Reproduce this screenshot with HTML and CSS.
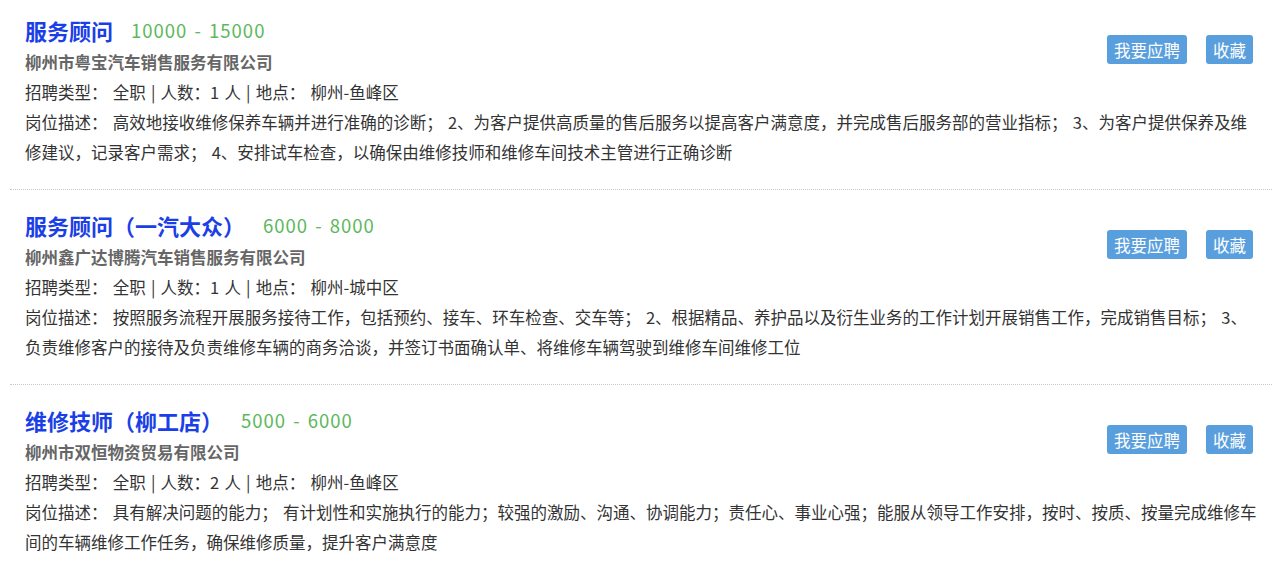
FILE: index.html
```html
<!DOCTYPE html>
<html lang="zh-CN">
<head>
    <meta charset="UTF-8">
    <meta name="viewport" content="width=device-width, initial-scale=1.0">
    <title>招聘信息</title>
    <link rel="stylesheet" href="styles.css">
</head>
<body>
    <ul class="job-list">
        <li class="job-item">
            <div class="job-head">
                <div class="job-main">
                    <div class="job-title">
                        <a href="#" class="job-name">服务顾问</a>
                        <span class="job-salary">10000 - 15000</span>
                    </div>
                    <div class="job-company">柳州市粤宝汽车销售服务有限公司</div>
                    <div class="job-info">招聘类型： 全职 | 人数：1 人 | 地点： 柳州-鱼峰区</div>
                </div>
                <div class="job-actions">
                    <button type="button" class="btn">我要应聘</button>
                    <button type="button" class="btn">收藏</button>
                </div>
            </div>
            <div class="job-desc">岗位描述： 高效地接收维修保养车辆并进行准确的诊断； 2、为客户提供高质量的售后服务以提高客户满意度，并完成售后服务部的营业指标； 3、为客户提供保养及维修建议，记录客户需求； 4、安排试车检查，以确保由维修技师和维修车间技术主管进行正确诊断</div>
        </li>
        <li class="job-item">
            <div class="job-head">
                <div class="job-main">
                    <div class="job-title">
                        <a href="#" class="job-name">服务顾问（一汽大众）</a>
                        <span class="job-salary">6000 - 8000</span>
                    </div>
                    <div class="job-company">柳州鑫广达博腾汽车销售服务有限公司</div>
                    <div class="job-info">招聘类型： 全职 | 人数：1 人 | 地点： 柳州-城中区</div>
                </div>
                <div class="job-actions">
                    <button type="button" class="btn">我要应聘</button>
                    <button type="button" class="btn">收藏</button>
                </div>
            </div>
            <div class="job-desc">岗位描述： 按照服务流程开展服务接待工作，包括预约、接车、环车检查、交车等； 2、根据精品、养护品以及衍生业务的工作计划开展销售工作，完成销售目标； 3、负责维修客户的接待及负责维修车辆的商务洽谈，并签订书面确认单、将维修车辆驾驶到维修车间维修工位</div>
        </li>
        <li class="job-item">
            <div class="job-head">
                <div class="job-main">
                    <div class="job-title">
                        <a href="#" class="job-name">维修技师（柳工店）</a>
                        <span class="job-salary">5000 - 6000</span>
                    </div>
                    <div class="job-company">柳州市双恒物资贸易有限公司</div>
                    <div class="job-info">招聘类型： 全职 | 人数：2 人 | 地点： 柳州-鱼峰区</div>
                </div>
                <div class="job-actions">
                    <button type="button" class="btn">我要应聘</button>
                    <button type="button" class="btn">收藏</button>
                </div>
            </div>
            <div class="job-desc">岗位描述： 具有解决问题的能力； 有计划性和实施执行的能力；较强的激励、沟通、协调能力；责任心、事业心强；能服从领导工作安排，按时、按质、按量完成维修车间的车辆维修工作任务，确保维修质量，提升客户满意度</div>
        </li>
    </ul>
</body>
</html>
```

FILE: styles.css
```css
/* 职位列表 */
body {
    margin: 0;
    background-color: #fff;
    color: #333;
    font-family: "Noto Sans CJK SC", sans-serif;
}
.job-list {
    list-style: none;
    margin: 0 6px 0 10px;
    padding: 0;
}
.job-item {
    padding: 18px 15px 22px 15px;
    border-bottom: 1px dotted #c8c8c8;
}
.job-item:first-child {
    padding-top: 13px;
}
.job-head {
    display: flex;
    justify-content: space-between;
    align-items: flex-start;
}
.job-title {
    display: flex;
    align-items: center;
    height: 34px;
}
.job-name {
    color: #1b3fe6; /* 蓝色标题 */
    font-size: 22px;
    font-weight: bold;
    text-decoration: none;
}
.job-salary {
    margin-left: 18px;
    color: #5cb85c; /* 绿色薪资 */
    font-size: 18.5px;
    letter-spacing: 1px;
    word-spacing: 2px;
}
.job-company {
    color: #666;
    font-size: 16.5px;
    font-weight: bold;
    line-height: 30px;
}
.job-info,
.job-desc {
    font-size: 16.5px;
    line-height: 30px;
    word-spacing: 1.5px;
}
.job-actions {
    display: flex;
    gap: 19px;
    margin-top: 22px;
    margin-right: 4px;
}
.btn {
    background-color: #5a9fdd;
    color: #fff;
    border: none;
    border-radius: 3px;
    padding: 0 7px;
    height: 29px;
    font-family: inherit;
    font-size: 16.5px;
    cursor: pointer;
}
.btn:hover {
    background-color: #4a8fcd;
}
```
